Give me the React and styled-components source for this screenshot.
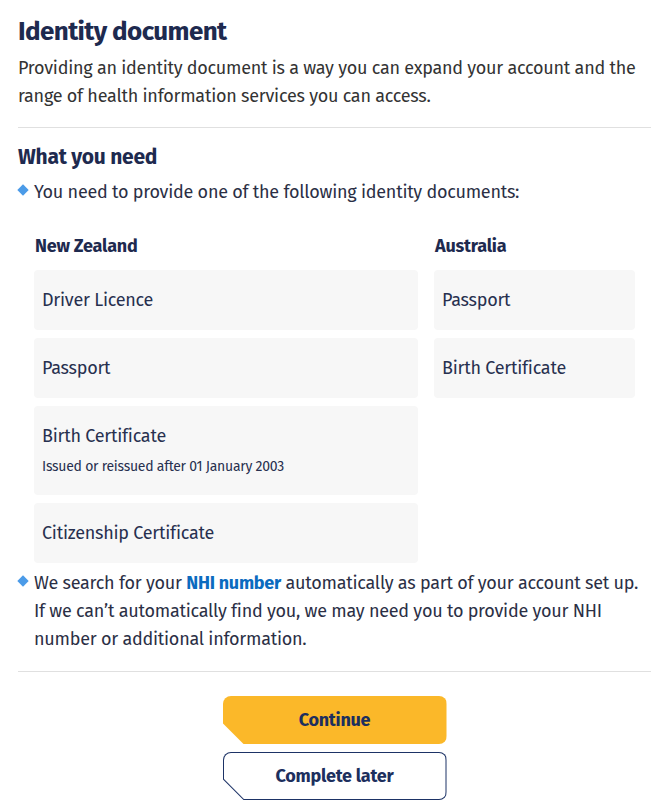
import React from "react";
import styled, { createGlobalStyle } from "styled-components";

const Global = createGlobalStyle`
  html, body { margin: 0; padding: 0; background: #ffffff; }
  body { font-family: "Fira Sans", Roboto, "Liberation Sans", sans-serif; color: #333333; }
  * { box-sizing: border-box; }
`;

const Page = styled.main`
  width: 667px;
  padding: 14px 16px 10px 18px;
  letter-spacing: -0.25px;
`;

const Title = styled.h1`
  margin: 0;
  font-size: 26px;
  line-height: 36px;
  font-weight: 700;
  letter-spacing: -0.6px;
  color: #1e2a4f;
`;

const Intro = styled.p`
  margin: 4px 0 0;
  font-size: 18px;
  line-height: 28px;
  color: #333333;
`;

const Divider = styled.hr`
  border: 0;
  border-top: 1px solid #e0e0e0;
  margin: ${(p) => p.$top || 16}px 0 ${(p) => p.$bottom || 16}px;
`;

const SubTitle = styled.h2`
  margin: 0;
  font-size: 21px;
  line-height: 28px;
  font-weight: 700;
  color: #1e2a4f;
`;

const Bullet = styled.div`
  display: flex;
  align-items: flex-start;
  gap: 7px;
  margin-top: ${(p) => p.$top || 0}px;
  font-size: 18px;
  line-height: 28px;
  color: #2b2f45;
`;

const Diamond = styled.span`
  flex: none;
  width: 8px;
  height: 8px;
  margin: 8px 0 0 1px;
  background: #4b9be8;
  transform: rotate(45deg);
`;

const Link = styled.a`
  color: #0b6bbf;
  font-weight: 700;
  text-decoration: none;
`;

const Grid = styled.div`
  display: grid;
  grid-template-columns: 384px 201px;
  column-gap: 16px;
  padding: 0 16px;
  margin-top: 29px;
`;

const Column = styled.section`
  display: flex;
  flex-direction: column;
  gap: 8px;
`;

const ColumnHead = styled.h3`
  margin: 0 0 5px 1px;
  font-size: 18px;
  line-height: 22px;
  font-weight: 700;
  letter-spacing: -0.2px;
  color: #1e2a4f;
`;

const Card = styled.div`
  padding: 16px 8px;
  background: #f7f7f7;
  border-radius: 4px;
  display: flex;
  flex-direction: column;
`;

const CardTitle = styled.span`
  font-size: 18px;
  line-height: 28px;
  color: #27304f;
`;

const CardNote = styled.span`
  margin-top: 5px;
  font-size: 14px;
  line-height: 24px;
  color: #27304f;
`;

const Actions = styled.div`
  display: flex;
  flex-direction: column;
  align-items: center;
  gap: 8px;
`;

const cut = `polygon(0 0, 100% 0, 100% 100%, 21px 100%, 0 calc(100% - 21px))`;

const Primary = styled.button`
  width: 224px;
  height: 48px;
  border: 0;
  border-radius: 8px;
  clip-path: ${cut};
  background: #fbb829;
  color: #1d2f5e;
  font: 700 18px "Fira Sans", Roboto, "Liberation Sans", sans-serif;
  letter-spacing: -0.25px;
  cursor: pointer;
`;

const Secondary = styled.button`
  width: 224px;
  height: 48px;
  border: 0;
  padding: 1px;
  border-radius: 8px;
  clip-path: ${cut};
  background: #1d3366;
  cursor: pointer;
  display: flex;
`;

const SecondaryFace = styled.span`
  flex: 1;
  display: flex;
  align-items: center;
  justify-content: center;
  border-radius: 7px;
  clip-path: polygon(0 0, 100% 0, 100% 100%, 20.4px 100%, 0 calc(100% - 20.4px));
  background: #ffffff;
  color: #1d2f5e;
  font: 700 18px "Fira Sans", Roboto, "Liberation Sans", sans-serif;
  letter-spacing: -0.25px;
`;

const nz = [
  { t: "Driver Licence" },
  { t: "Passport" },
  { t: "Birth Certificate", n: "Issued or reissued after 01 January 2003" },
  { t: "Citizenship Certificate" },
];
const au = [{ t: "Passport" }, { t: "Birth Certificate" }];

const DocColumn = ({ title, items }) => (
  <Column>
    <ColumnHead>{title}</ColumnHead>
    {items.map((d) => (
      <Card key={d.t}>
        <CardTitle>{d.t}</CardTitle>
        {d.n && <CardNote>{d.n}</CardNote>}
      </Card>
    ))}
  </Column>
);

export default function App() {
  return (
    <Page>
      <Global />
      <Title>Identity document</Title>
      <Intro>
        Providing an identity document is a way you can expand your account and the
        range of health information services you can access.
      </Intro>
      <Divider $top={17} $bottom={15} />
      <SubTitle>What you need</SubTitle>
      <Bullet $top={7}>
        <Diamond />
        <span>You need to provide one of the following identity documents:</span>
      </Bullet>
      <Grid>
        <DocColumn title="New Zealand" items={nz} />
        <DocColumn title="Australia" items={au} />
      </Grid>
      <Bullet $top={6}>
        <Diamond />
        <span>
          We search for your <Link href="#">NHI number</Link> automatically as part of your
          account set up. If we can’t automatically find you, we may need you to provide
          your NHI number or additional information.
        </span>
      </Bullet>
      <Divider $top={18} $bottom={24} />
      <Actions>
        <Primary>Continue</Primary>
        <Secondary>
          <SecondaryFace>Complete later</SecondaryFace>
        </Secondary>
      </Actions>
    </Page>
  );
}
